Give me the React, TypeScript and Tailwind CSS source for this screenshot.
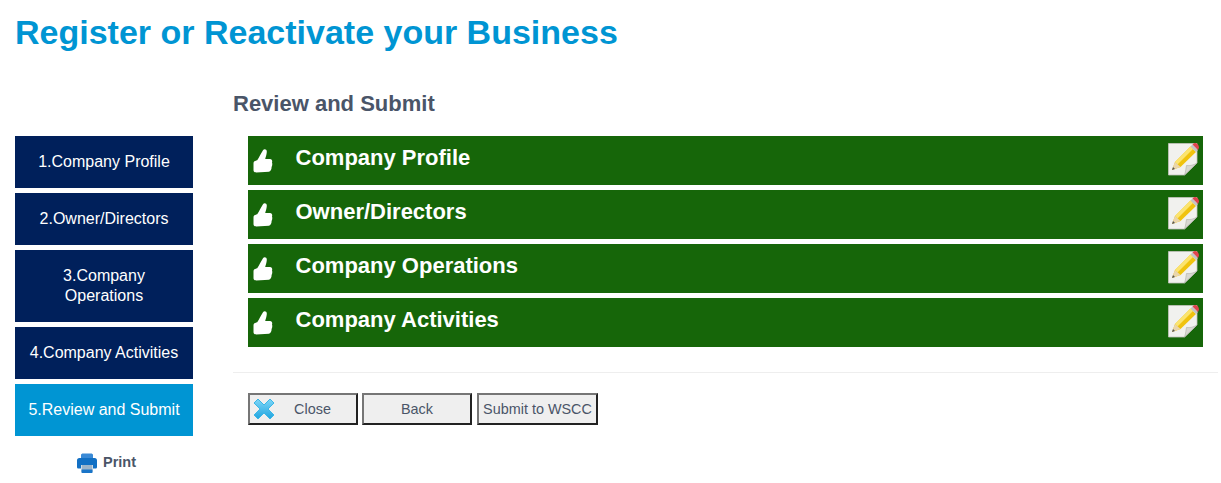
const steps = [
  { label: '1.Company Profile', tall: false, active: false },
  { label: '2.Owner/Directors', tall: false, active: false },
  { label: '3.Company Operations', tall: true, active: false },
  { label: '4.Company Activities', tall: false, active: false },
  { label: '5.Review and Submit', tall: false, active: true },
]

const sections = ['Company Profile', 'Owner/Directors', 'Company Operations', 'Company Activities']

function ThumbIcon() {
  return (
    <svg width="20" height="24" viewBox="0 0 20 24" className="shrink-0">
      <path
        d="M0.5 14.5 C0.5 12.5 2 11.8 4.2 11.2 C6.2 8.2 8 4.5 10 1.2 C11 -0.4 14 0 13.8 3 C13.6 6 12.6 8 12.2 10 L17 10 C19 10 19.6 12 19 13.5 C19.6 15 19.2 17 18.6 18 C18.6 20 18 22 16 22.8 L3.2 23.4 C1.2 23.4 0.5 22.4 0.5 21 Z"
        fill="#ffffff"
      />
    </svg>
  )
}

function EditIcon() {
  return (
    <svg width="32" height="36" viewBox="0 0 32 36" className="mb-[3px] shrink-0">
      <path d="M1.5 2.5 L30 2.5 L30 22 L17.5 34 L1.5 34 Z" fill="#f1f1ee" stroke="#c4c4be" strokeWidth="0.8" />
      <path d="M17.5 34 C19 30 19 26 19.5 24.5 C23 25 27 24 30 22 Z" fill="#d8d8d2" stroke="#aeaea8" strokeWidth="0.6" />
      <path d="M5 29 L8 21 L23.5 5.5 L29 11 L13.5 26 Z" fill="#f0c30f" />
      <path d="M8 21 L23.5 5.5 L26 8 L10.5 23.5 Z" fill="#fbe46f" />
      <path d="M5 29 L8 21 L13.5 26 Z" fill="#e9d5ac" />
      <path d="M5 29 L6 26 L8 28 Z" fill="#555555" />
      <path d="M23.5 5.5 L25.5 3.5 L31 9 L29 11 Z" fill="#c4c4c4" />
      <path d="M25.5 3.5 C27 1.5 29 1.5 30.5 3 C32 4.5 32.5 7 31 9 Z" fill="#e0444e" />
    </svg>
  )
}

function CloseIcon() {
  return (
    <svg width="22" height="22" viewBox="0 0 22 22" className="absolute left-[3px] top-[3px]">
      <defs>
        <linearGradient id="closeFill" x1="0" y1="0" x2="0" y2="1">
          <stop offset="0" stopColor="#7fd6f7" />
          <stop offset="1" stopColor="#1fa5e0" />
        </linearGradient>
      </defs>
      <path
        d="M1 5 L5 1 L11 7 L17 1 L21 5 L15 11 L21 17 L17 21 L11 15 L5 21 L1 17 L7 11 Z"
        fill="url(#closeFill)"
        stroke="#3bb6e6"
        strokeWidth="1"
        strokeLinejoin="round"
      />
    </svg>
  )
}

function PrintIcon() {
  return (
    <svg width="22" height="22" viewBox="0 0 22 22" className="shrink-0">
      <path d="M5 3 C5 2 6 1.5 7 1.5 H15 C16 1.5 17 2 17 3 V7 H5 Z" fill="#3a8ad6" />
      <path d="M3.5 6 H18.5 C20.3 6 21 7.2 21 8.5 V15 C21 16 20.3 16.5 19.5 16.5 H17 V13 H5 V16.5 H2.5 C1.7 16.5 1 16 1 15 V8.5 C1 7.2 1.7 6 3.5 6 Z" fill="#1270c4" />
      <path d="M5.5 13 H16.5 V20.5 H5.5 Z" fill="#9db4c9" />
      <path d="M5.5 17.5 H16.5 V20 C16.5 20.6 16 21 15.5 21 H6.5 C6 21 5.5 20.6 5.5 20 Z" fill="#1a75c8" />
    </svg>
  )
}

export default function App() {
  return (
    <div className="min-h-[483px] bg-white font-['Liberation_Sans',Arial,sans-serif] text-[#4a5568]">
      <h1 className="pl-[15px] pt-[12px] text-[34px] leading-[40px] font-bold text-[#0095d3]">
        Register or Reactivate your Business
      </h1>

      <div className="mt-[38px] flex">
        <nav className="ml-[15px] mt-[46px] flex w-[178px] shrink-0 flex-col gap-[5px]">
          {steps.map(step => (
            <div
              key={step.label}
              className={`flex items-center justify-center px-2 text-center text-base leading-5 text-white ${
                step.tall ? 'h-[72px]' : 'h-[52px]'
              } ${step.active ? 'bg-[#0095d3]' : 'bg-[#00205b]'}`}
            >
              {step.label}
            </div>
          ))}
          <div className="mt-[11px] flex items-center justify-center gap-[5px] pl-[4px] text-[14.5px] font-bold">
            <PrintIcon />
            Print
          </div>
        </nav>

        <main className="ml-10 mr-[3px] flex-1">
          <h2 className="h-[46px] pt-[2px] text-[22px] leading-6 font-bold">Review and Submit</h2>

          <div className="mx-[15px] flex flex-col gap-[5px]">
            {sections.map(section => (
              <div key={section} className="flex h-[49px] items-center bg-[#166609] pl-[5px] pr-[4px]">
                <div className="mt-[1px] flex w-[42.5px]">
                  <ThumbIcon />
                </div>
                <span className="mb-[6px] flex-1 text-[22px] font-bold text-white">{section}</span>
                <EditIcon />
              </div>
            ))}
          </div>

          <div className="mt-[25px] border-t border-[#eeeeee] pl-[15px] pt-5">
            <div className="flex gap-1 text-[14.4px]">
              <button className="relative h-8 w-[110px] border-2 border-t-[#767676] border-l-[#767676] border-r-[#222222] border-b-[#222222] bg-[#efefef] pl-[19px] pt-[1px]">
                <CloseIcon />
                Close
              </button>
              <button className="h-8 w-[110px] border-2 border-t-[#767676] border-l-[#767676] border-r-[#222222] border-b-[#222222] bg-[#efefef] pt-[1px]">
                Back
              </button>
              <button className="ml-[1px] h-8 w-[121px] border-2 border-t-[#767676] border-l-[#767676] border-r-[#222222] border-b-[#222222] bg-[#efefef] pt-[1px]">
                Submit to WSCC
              </button>
            </div>
          </div>
        </main>
      </div>
    </div>
  )
}
